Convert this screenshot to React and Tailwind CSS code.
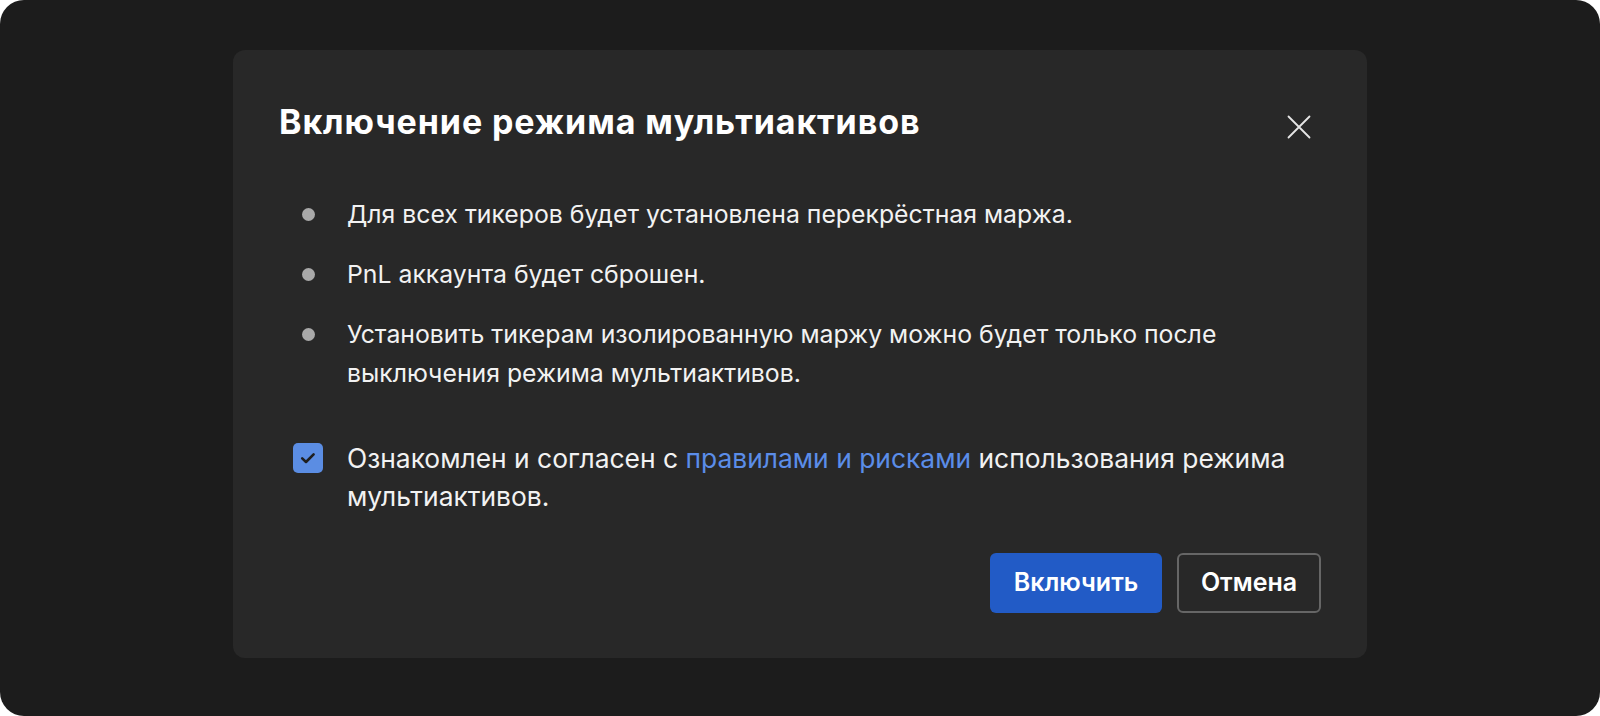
import React from "react"

const items = [
  "Для всех тикеров будет установлена перекрёстная маржа.",
  "PnL аккаунта будет сброшен.",
  "Установить тикерам изолированную маржу можно будет только после выключения режима мультиактивов.",
]

function CloseIcon() {
  return (
    <svg width="24" height="24" viewBox="0 0 24 24" fill="none" className="mt-[15px] mr-[10px] shrink-0">
      <path d="M1.5 1.5L22.5 22.5M22.5 1.5L1.5 22.5" stroke="#e6e6e6" strokeWidth="1.8" strokeLinecap="round" />
    </svg>
  )
}

function Checkbox() {
  return (
    <div className="w-[30px] h-[30px] rounded-[5px] bg-[#5b8de3] flex items-center justify-center shrink-0">
      <svg width="18" height="18" viewBox="0 0 18 18" fill="none">
        <path d="M3.2 9.4L7 13L14.6 5.4" stroke="#1f1f1f" strokeWidth="2.6" strokeLinecap="round" strokeLinejoin="round" />
      </svg>
    </div>
  )
}

export default function App() {
  return (
    <div className="w-full h-[716px] bg-[#1c1c1c] rounded-[24px] flex justify-center items-start pt-[50px] font-['Inter',sans-serif]">
      <div className="w-[1134px] bg-[#282828] rounded-[12px] pt-[50px] pb-[45px] px-[46px]">
        {/* Header */}
        <div className="flex items-start justify-between">
          <h2 className="text-[34px] leading-[44px] font-bold tracking-[0.9px] text-white">
            Включение режима мультиактивов
          </h2>
          <CloseIcon />
        </div>

        {/* Bullets */}
        <ul className="mt-[51px] flex flex-col gap-[21px]">
          {items.map((text) => (
            <li key={text} className="flex items-start">
              <div className="w-[68px] pl-[23px] h-[39px] flex items-center shrink-0">
                <span className="w-[13px] h-[13px] rounded-full bg-[#a9a9a9]" />
              </div>
              <p className="flex-1 text-[24.8px] leading-[39px] text-[#f2f2f2]">{text}</p>
            </li>
          ))}
        </ul>

        {/* Agreement */}
        <div className="mt-[46px] flex items-start">
          <div className="w-[68px] pl-[14px] h-[38px] flex items-center shrink-0">
            <Checkbox />
          </div>
          <p className="flex-1 text-[26.4px] leading-[38px] text-[#f2f2f2]">
            Ознакомлен и согласен с <span className="text-[#5b8de8]">правилами и рисками</span> использования режима мультиактивов.
          </p>
        </div>

        {/* Actions */}
        <div className="mt-[38px] flex justify-end gap-[15px]">
          <button className="w-[172px] h-[60px] rounded-[6px] bg-[#225bc6] text-white text-[25px] font-semibold">
            Включить
          </button>
          <button className="w-[144px] h-[60px] rounded-[6px] border-2 border-[#666666] text-white text-[25px] font-semibold">
            Отмена
          </button>
        </div>
      </div>
    </div>
  )
}
